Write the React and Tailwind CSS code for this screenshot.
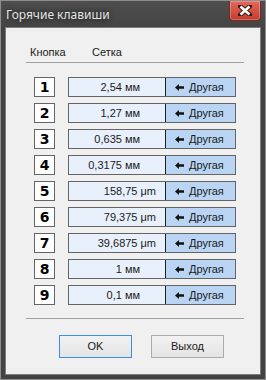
import React from 'react';

const rows = [
  ['1', '2,54', 'мм'],
  ['2', '1,27', 'мм'],
  ['3', '0,635', 'мм'],
  ['4', '0,3175', 'мм'],
  ['5', '158,75', 'μm'],
  ['6', '79,375', 'μm'],
  ['7', '39,6875', 'μm'],
  ['8', '1', 'мм'],
  ['9', '0,1', 'мм'],
];

const ui = { fontFamily: '"Liberation Sans", Arial, sans-serif' };

function CloseButton() {
  return (
    <div className="flex h-[20px] w-[32px] items-center justify-center rounded-b-[4px] border border-t-0 border-[#7a2a22] bg-gradient-to-b from-[#e2695c] to-[#c23c2e] shadow-[inset_0_0_0_1px_rgba(255,255,255,0.25)]">
      <svg width="14" height="11" viewBox="0 0 14 11">
        <path d="M2 1 L12 10 M12 1 L2 10" stroke="#3a1a16" strokeWidth="4.5" strokeLinecap="square" />
        <path d="M2.5 1.5 L11.5 9.5 M11.5 1.5 L2.5 9.5" stroke="#ffffff" strokeWidth="2.6" />
      </svg>
    </div>
  );
}

function Row({ num, value, unit }) {
  const micro = unit === 'μm';
  return (
    <div className="flex h-[20px] items-center">
      <div className="ml-[28px] flex h-[20px] w-[21px] items-center justify-center border border-[#646464] bg-white text-[14px] font-bold text-black" style={{ fontFamily: 'Verdana, "DejaVu Sans", sans-serif' }}>
        {num}
      </div>
      <div className="ml-[13px] flex h-[20px] w-[168px] border border-[#646464]">
        <div className={`flex flex-1 items-center justify-end bg-[#e8f0fb] text-[11px] text-[#1a1a1a] ${micro ? 'pr-[9px]' : 'pr-[25px]'}`}>
          <span>{value}</span>
          <span className="ml-[3px]">{unit}</span>
        </div>
        <div className="flex w-[70px] items-center border-l border-[#1e1e1e] bg-[#b9d5f3] pl-[9px] text-[11px] text-[#1a1a1a]">
          <svg width="9" height="7" viewBox="0 0 9 7" className="mr-[5px]">
            <path d="M0 3.5 L4 0 L4 2.3 L9 2.3 L9 4.7 L4 4.7 L4 7 Z" fill="#111" />
          </svg>
          Другая
        </div>
      </div>
    </div>
  );
}

export default function App() {
  return (
    <div className="h-[380px] w-[266px] border border-[#8e8e8e] bg-[#434343]" style={ui}>
      <div className="flex h-[26px] items-start justify-between bg-gradient-to-b from-[#4e4e4e] to-[#454545]">
        <div
          className="pl-[5px] pt-[6px] text-[12px] leading-[16px] text-[#e4e4e4]"
          style={{ fontFamily: '"Noto Sans", "Open Sans", sans-serif', textShadow: '0 0 6px rgba(0,0,0,0.9)' }}
        >
          Горячие клавиши
        </div>
        <div className="mr-[4px]">
          <CloseButton />
        </div>
      </div>

      <div className="mx-[4px] h-[348px] border border-[#7c7c7c] bg-[#f0f0f0]">
        <div className="flex pt-[17px] text-[11px] leading-[14px] text-[#1a1a1a]">
          <span className="ml-[24px] w-[62px]">Кнопка</span>
          <span>Сетка</span>
        </div>
        <div className="ml-[20px] mt-[3px] h-px w-[218px] bg-[#a0a0a0]" />

        <div className="mt-[14px] flex flex-col gap-[6px]">
          {rows.map(([num, value, unit]) => (
            <Row key={num} num={num} value={value} unit={unit} />
          ))}
        </div>

        <div className="ml-[20px] mt-[13px] h-px w-[218px] bg-[#a0a0a0]" />

        <div className="mt-[16px] flex text-[11px] text-[#1a1a1a]">
          <button type="button" className="ml-[53px] h-[23px] w-[73px] border border-[#3c8fe6] bg-gradient-to-b from-[#f2f2f2] to-[#e4e4e4]">
            OK
          </button>
          <button type="button" className="ml-[19px] h-[23px] w-[73px] border border-[#acacac] bg-gradient-to-b from-[#f2f2f2] to-[#e4e4e4]">
            Выход
          </button>
        </div>
      </div>
    </div>
  );
}
